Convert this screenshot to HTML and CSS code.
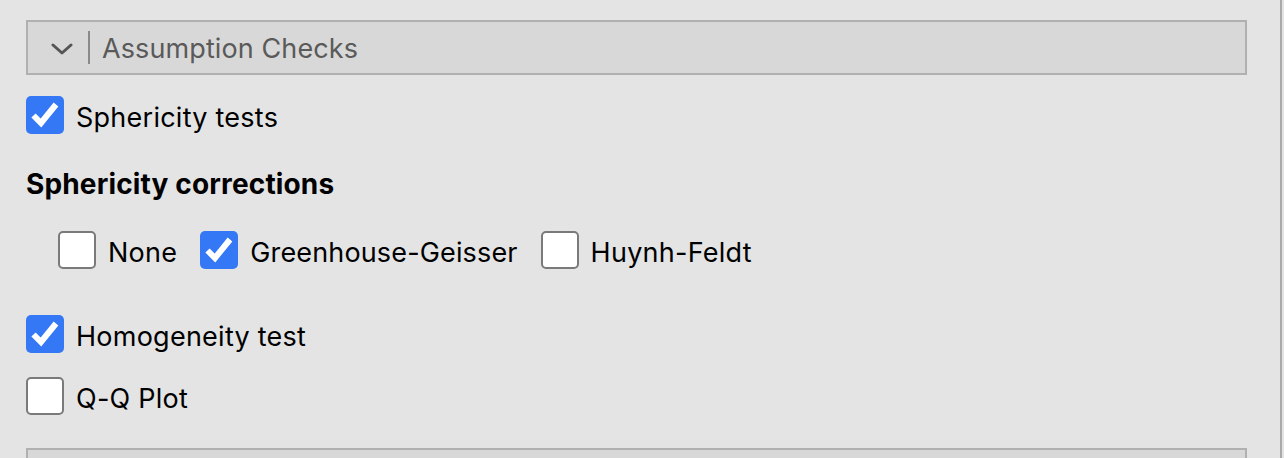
FILE: index.html
```html
<!DOCTYPE html>
<html>
<head>
<meta charset="utf-8">
<link rel="stylesheet" href="styles.css">
</head>
<body>
<div class="panel">
  <div class="section-header">
    <svg class="chevron" width="22" height="12" viewBox="0 0 22 12"><polyline points="2,2 11,10 20,2" fill="none" stroke="#555" stroke-width="3" stroke-linecap="round" stroke-linejoin="round"/></svg>
    <span class="divider"></span>
    <span class="section-title">Assumption Checks</span>
  </div>

  <label class="check row-first">
    <span class="box on"><svg viewBox="0 0 38 38"><path d="M7.5 19.5 L15 27 L30 8.5" fill="none" stroke="#fff" stroke-width="6" stroke-linejoin="miter"/></svg></span>
    <span class="label">Sphericity tests</span>
  </label>

  <div class="group-title">Sphericity corrections</div>

  <div class="inline-group">
    <label class="check">
      <span class="box"></span>
      <span class="label">None</span>
    </label>
    <label class="check">
      <span class="box on"><svg viewBox="0 0 38 38"><path d="M7.5 19.5 L15 27 L30 8.5" fill="none" stroke="#fff" stroke-width="6" stroke-linejoin="miter"/></svg></span>
      <span class="label tight">Greenhouse-Geisser</span>
    </label>
    <label class="check">
      <span class="box"></span>
      <span class="label">Huynh-Feldt</span>
    </label>
  </div>

  <label class="check row-homog">
    <span class="box on"><svg viewBox="0 0 38 38"><path d="M7.5 19.5 L15 27 L30 8.5" fill="none" stroke="#fff" stroke-width="6" stroke-linejoin="miter"/></svg></span>
    <span class="label">Homogeneity test</span>
  </label>

  <label class="check row-qq">
    <span class="box"></span>
    <span class="label">Q-Q Plot</span>
  </label>

  <div class="section-header next"></div>
</div>
</body>
</html>
```
FILE: styles.css
```css
html, body {
  margin: 0;
  padding: 0;
  background: #e4e4e4;
}
body {
  font-family: "Inter", "Liberation Sans", sans-serif;
  color: #000;
  border-right: 2px solid #aaaaaa;
  box-sizing: border-box;
  width: 1282px;
  height: 458px;
  overflow: hidden;
}
.panel {
  padding: 20px 0 0 26px;
  display: flex;
  flex-direction: column;
  align-items: flex-start;
}
.section-header {
  box-sizing: border-box;
  width: 1221px;
  height: 55px;
  flex-shrink: 0;
  border: 2px solid #b0b0b0;
  background: #d8d8d8;
  display: flex;
  align-items: center;
}
.chevron {
  margin-left: 23px;
  margin-top: 2px;
}
.divider {
  width: 2px;
  height: 33px;
  background: #8a8a8a;
  margin-left: 15px;
}
.section-title {
  margin-left: 12px;
  font-size: 27px;
  letter-spacing: 0.1px;
  color: #5a5a5a;
  margin-top: 1px;
}
.check {
  display: flex;
  align-items: center;
}
.box {
  box-sizing: border-box;
  width: 38px;
  height: 38px;
  border-radius: 5px;
  background: #fff;
  border: 2px solid #7a7a7a;
  display: flex;
  flex-shrink: 0;
}
.box.on {
  background: #3478f6;
  border: none;
}
.box svg {
  width: 38px;
  height: 38px;
}
.label {
  margin-left: 12px;
  font-size: 27px;
  letter-spacing: 0.25px;
  line-height: 32px;
  margin-top: 5px;
}
.label.tight {
  letter-spacing: 0.15px;
}
.row-first {
  margin-top: 21px;
}
.group-title {
  margin-top: 33px;
  font-size: 28px;
  letter-spacing: 0.15px;
  line-height: 34px;
  font-weight: 700;
}
.inline-group {
  margin-top: 30px;
  margin-left: 32px;
  display: flex;
  gap: 23px;
}
.row-homog {
  margin-top: 46px;
}
.row-qq {
  margin-top: 24px;
}
.section-header.next {
  margin-top: 33px;
}
```
